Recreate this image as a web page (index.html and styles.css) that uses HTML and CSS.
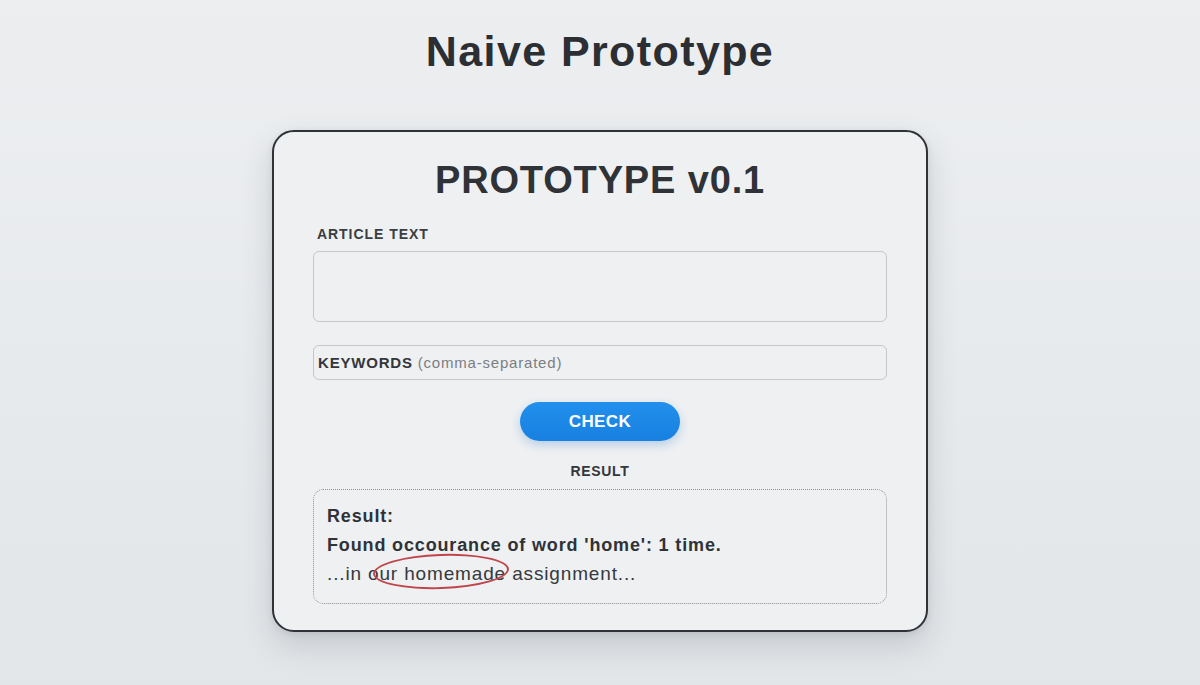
FILE: index.html
```html
<!DOCTYPE html>
<html lang="en">
<head>
<meta charset="utf-8">
<title>Naive Prototype</title>
<link rel="stylesheet" href="styles.css">
</head>
<body>
<main class="page">
  <h1 class="page-title">Naive Prototype</h1>
  <section class="card">
    <h2 class="card-title">PROTOTYPE v0.1</h2>
    <label class="field-label" for="article">ARTICLE TEXT</label>
    <textarea id="article" class="article-input"></textarea>
    <div class="keywords-input">
      <span class="kw-strong">KEYWORDS</span><span class="kw-hint"> (comma-separated)</span>
    </div>
    <div class="actions">
      <button class="check-btn" type="button">CHECK</button>
    </div>
    <div class="result-label">RESULT</div>
    <div class="result-box">
      <p class="result-line strong">Result:</p>
      <p class="result-line strong">Found occourance of word 'home': 1 time.</p>
      <p class="result-line plain">...in o<span class="mark">ur homemade</span> assignment...</p>
    </div>
  </section>
</main>
</body>
</html>
```

FILE: styles.css
```css
* { box-sizing: border-box; }
html, body { margin: 0; padding: 0; }
body {
  height: 685px;
  overflow: hidden;
  background: linear-gradient(180deg, #eceef0 0%, #e3e6e9 100%);
  font-family: "Liberation Sans", Arial, sans-serif;
  color: #2e3136;
}
.page {
  display: flex;
  flex-direction: column;
  align-items: center;
  padding-top: 26px;
}
.page-title {
  margin: 0;
  font-size: 43px;
  line-height: 50px;
  font-weight: 700;
  color: #2b2e33;
  letter-spacing: 1.4px;
}
.card {
  margin-top: 54px;
  width: 656px;
  height: 502px;
  border: 2.5px solid #2f3338;
  border-radius: 22px;
  background: #eef0f2;
  box-shadow: 0 14px 30px rgba(60, 70, 80, 0.18), 0 2px 6px rgba(60, 70, 80, 0.1);
  padding: 24px 39px 0 39px;
  display: flex;
  flex-direction: column;
}
.card-title {
  margin: 0;
  text-align: center;
  font-size: 38px;
  line-height: 48px;
  font-weight: 700;
  color: #2f3237;
  letter-spacing: 0.85px;
}
.field-label {
  margin-top: 21px;
  padding-left: 4px;
  font-size: 14px;
  line-height: 18px;
  font-weight: 700;
  color: #3a3d42;
  letter-spacing: 0.95px;
}
.article-input {
  margin-top: 8px;
  height: 71px;
  width: 100%;
  resize: none;
  border: 1px solid #c4c7cb;
  border-radius: 6px;
  background: #eef0f2;
  font-family: inherit;
  display: block;
}
.keywords-input {
  margin-top: 23px;
  height: 35px;
  border: 1px solid #c4c7cb;
  border-radius: 6px;
  background: #eef0f2;
  display: flex;
  align-items: center;
  padding-left: 4px;
  font-size: 15px;
  letter-spacing: 0.8px;
}
.kw-strong { font-weight: 700; color: #33363b; }
.kw-hint { color: #7b7e83; white-space: pre; }
.actions {
  margin-top: 22px;
  display: flex;
  justify-content: center;
}
.check-btn {
  width: 160px;
  height: 39px;
  border: none;
  border-radius: 20px;
  background: linear-gradient(180deg, #2290ec 0%, #1780e0 100%);
  color: #ffffff;
  font-family: inherit;
  font-size: 17px;
  font-weight: 700;
  letter-spacing: 0.4px;
  box-shadow: 0 4px 10px rgba(23, 110, 200, 0.25);
}
.result-label {
  margin-top: 21px;
  text-align: center;
  font-size: 14px;
  line-height: 18px;
  font-weight: 700;
  color: #33363b;
  letter-spacing: 0.7px;
}
.result-box {
  margin-top: 9px;
  height: 115px;
  border: 1.5px dotted #8d9095;
  border-radius: 10px;
  padding: 15px 13px 0 13px;
}
.result-line {
  margin: 0 0 7px 0;
  font-size: 18px;
  line-height: 22px;
  color: #36393e;
  letter-spacing: 0.85px;
}
.result-line.strong { font-weight: 700; color: #2f3237; }
.result-line.plain { font-size: 19px; }
.mark {
  position: relative;
}
.mark::after {
  content: "";
  position: absolute;
  left: -6px;
  right: -3px;
  top: -9px;
  bottom: -5px;
  border: 2px solid #c0454a;
  border-radius: 50%;
  transform: rotate(-2deg);
}
```
